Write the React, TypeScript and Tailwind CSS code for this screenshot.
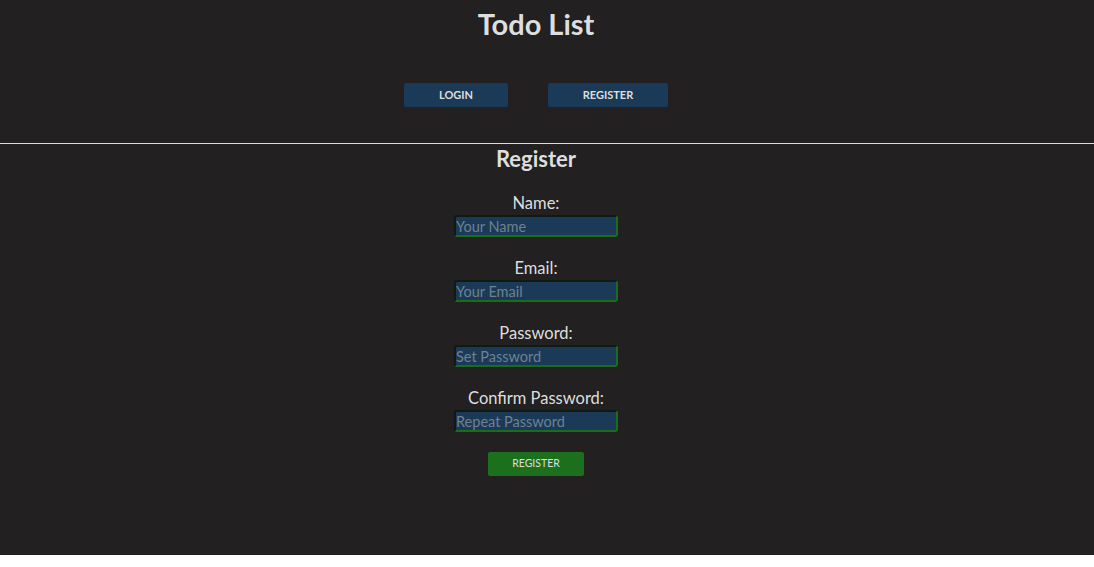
import React from 'react';

const fields = [
    { label: 'Name:', placeholder: 'Your Name', type: 'text' },
    { label: 'Email:', placeholder: 'Your Email', type: 'email' },
    { label: 'Password:', placeholder: 'Set Password', type: 'password' },
    { label: 'Confirm Password:', placeholder: 'Repeat Password', type: 'password' },
];

const App: React.FC = () => {
    return (
        <div className="h-[555px] bg-[#222021] text-[#dedede] font-['Lato','Noto_Sans',sans-serif]">
            <header className="h-[143px] pr-[22px] flex flex-col items-center">
                <h1 className="text-[29px] font-bold leading-[48px]">Todo List</h1>
                <nav className="mt-[35px] flex gap-10">
                    <button className="w-[104px] h-6 rounded-[2px] bg-[#1b3a57] text-[11px] font-bold text-[#dedede]">LOGIN</button>
                    <button className="w-[120px] h-6 rounded-[2px] bg-[#1b3a57] text-[11px] font-bold text-[#dedede]">REGISTER</button>
                </nav>
            </header>
            <main className="border-t border-[#dcdcdc] pr-[22px] flex flex-col items-center">
                <h2 className="mt-[3px] text-[22px] font-bold leading-[24px]">Register</h2>
                <form className="mt-[22px] flex flex-col items-center" onSubmit={e => e.preventDefault()}>
                    {fields.map(f => (
                        <div key={f.label} className="flex flex-col items-center mb-[21px]">
                            <label className="text-[16.5px] leading-[20px]">{f.label}</label>
                            <input
                                type={f.type}
                                placeholder={f.placeholder}
                                className="mt-[2px] w-[164px] h-[22px] rounded-[3px] bg-[#1b3a57] border-2 border-t-[#0f1a12] border-l-[#0f1a12] border-b-[#1a6e1a] border-r-[#1a6e1a] px-0 text-[14.5px] text-[#dedede] placeholder:text-[#6f8190] outline-none"
                            />
                        </div>
                    ))}
                    <button type="submit" className="-mt-[1px] w-24 h-6 rounded-[2px] bg-[#1c6f1c] text-[10.5px] text-[#dedede]">REGISTER</button>
                </form>
            </main>
        </div>
    );
};

export default App;
